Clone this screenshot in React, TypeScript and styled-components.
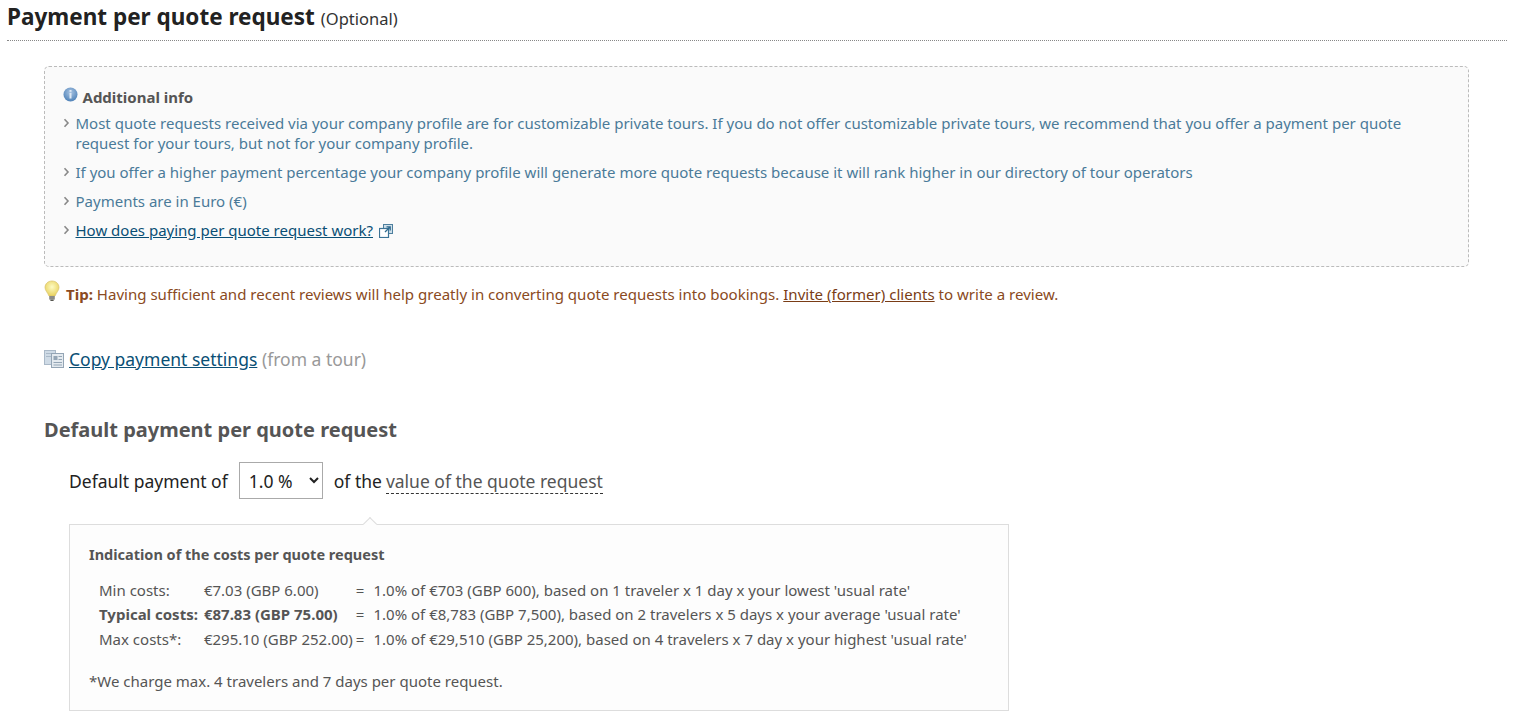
import React from 'react';
import styled, { createGlobalStyle } from 'styled-components';

const GlobalStyle = createGlobalStyle`
  html, body {
    margin: 0;
    padding: 0;
    background: #fff;
    font-family: "Noto Sans", "Open Sans", sans-serif;
    color: #333;
    overflow: hidden;
  }
`;

const Page = styled.div`
  height: 723px;
  padding: 0 12px 0 7px;
  overflow: hidden;
`;

const PageHeader = styled.div`
  height: 40px;
  border-bottom: 1px dotted #888;
  display: flex;
  align-items: baseline;
  gap: 6px;
`;

const PageTitle = styled.h1`
  margin: 0;
  font-size: 22.5px;
  line-height: 33px;
  font-weight: 700;
  color: #222;
`;

const Optional = styled.span`
  font-size: 16.5px;
  color: #333;
`;

const Content = styled.div`
  padding: 25px 38px 0 37px;
`;

const InfoBox = styled.div`
  height: 201px;
  box-sizing: border-box;
  padding: 20px 18px 0 18px;
  background: #fafafa;
  border: 1px dashed #bbb;
  border-radius: 5px;
`;

const InfoHeading = styled.div`
  display: flex;
  align-items: flex-start;
  gap: 5px;
  margin-top: -1px;
  font-size: 15px;
  line-height: 22px;
  font-weight: 700;
  color: #555;
`;

const InfoList = styled.ul`
  list-style: none;
  margin: 5px 0 0;
  padding: 0;
`;

const InfoItem = styled.li`
  display: flex;
  gap: 5.5px;
  margin-bottom: 9px;
  font-size: 15px;
  line-height: 20px;
  color: #4a7a99;
`;

const Chevron = styled.svg`
  flex: none;
  width: 7px;
  height: 10px;
  margin-top: 5px;
`;

const InfoLink = styled.a`
  color: #0a4f75;
  text-decoration: underline;
`;

const TipRow = styled.div`
  display: flex;
  align-items: flex-start;
  gap: 6px;
  margin-top: 13px;
  font-size: 15.05px;
  line-height: 28px;
  color: #8a4a22;
`;

const TipLink = styled.a`
  color: #7a3d16;
  text-decoration: underline;
`;

const CopyRow = styled.div`
  display: flex;
  align-items: center;
  gap: 4px;
  margin-top: 38px;
  font-size: 17.5px;
  line-height: 26px;
`;

const CopyLink = styled.a`
  color: #0a4f75;
  text-decoration: underline;
`;

const Muted = styled.span`
  color: #999;
`;

const SectionTitle = styled.h2`
  margin: 44px 0 0;
  font-size: 20px;
  line-height: 28px;
  font-weight: 700;
  color: #555;
`;

const Indented = styled.div`
  padding-left: 25px;
`;

const PaymentRow = styled.div`
  display: flex;
  align-items: center;
  margin-top: 18px;
  font-size: 17.5px;
  color: #222;
`;

const PercentSelect = styled.select`
  width: 84px;
  height: 37px;
  margin: 0 11px 0 11px;
  padding: 0 7px 0 5px;
  font-family: inherit;
  font-size: 17.5px;
  color: #222;
  background: #fff;
  border: 1px solid #aaa;
  border-radius: 0;
`;

const Definition = styled.span`
  margin: 2px 0 0 4px;
  color: #555;
  border-bottom: 1px dashed #333;
  line-height: 24px;
`;

const CostBox = styled.div`
  position: relative;
  width: 940px;
  height: 187px;
  box-sizing: border-box;
  margin-top: 25px;
  padding: 19px 19px 0;
  background: #fdfdfd;
  border: 1px solid #ddd;

  &::before {
    content: '';
    position: absolute;
    top: -6px;
    left: 295px;
    width: 9px;
    height: 9px;
    background: #fdfdfd;
    border-top: 1px solid #ddd;
    border-left: 1px solid #ddd;
    transform: rotate(45deg);
  }
`;

const CostTitle = styled.div`
  font-size: 14.5px;
  line-height: 20px;
  font-weight: 700;
  color: #555;
`;

const CostTable = styled.table`
  margin: 13.6px 0 0 10px;
  border-collapse: collapse;
  font-size: 15px;
  color: #555;
`;

const CostRow = styled.tr<{ $strong?: boolean }>`
  height: 24.5px;
  font-weight: ${p => (p.$strong ? 700 : 400)};
`;

const CostCell = styled.td<{ $pad?: number }>`
  padding: 0 ${p => p.$pad ?? 0}px 0 0;
  white-space: nowrap;
`;

const EqualsCell = styled.td`
  padding: 0 9px 0 0;
  font-weight: 400;
`;

const Basis = styled.td`
  padding: 0;
  white-space: nowrap;
  font-weight: 400;
`;

const Footnote = styled.div`
  margin-top: 20px;
  font-size: 15px;
  line-height: 20px;
  color: #555;
`;

const InfoIcon = () => (
  <svg width="15" height="15" viewBox="0 0 15 15" style={{ flex: 'none', marginTop: 1, marginLeft: -0.5 }}>
    <defs>
      <radialGradient id="infoFill" cx="50%" cy="35%" r="65%">
        <stop offset="0%" stopColor="#a9c4e2" />
        <stop offset="100%" stopColor="#4f82b8" />
      </radialGradient>
    </defs>
    <circle cx="7.5" cy="7.5" r="7" fill="url(#infoFill)" />
    <rect x="6.5" y="3" width="2" height="1.8" fill="#dfe9f4" />
    <rect x="6.5" y="6" width="2" height="5.5" fill="#dfe9f4" />
  </svg>
);

const ChevronIcon = () => (
  <Chevron viewBox="0 0 7 10">
    <path d="M1.5 1.2 L5 5 L1.5 8.8" fill="none" stroke="#888" strokeWidth="1.6" />
  </Chevron>
);

const PopupIcon = () => (
  <svg width="14" height="14" viewBox="0 0 14 14" style={{ marginLeft: 6, verticalAlign: -2 }}>
    <rect x="4.5" y="0.5" width="9" height="9" fill="#cfdfe9" stroke="#4d7f9e" />
    <rect x="0.5" y="4.5" width="9" height="9" fill="#fff" stroke="#3c7396" strokeWidth="1.2" />
    <path d="M6 8 L10.5 3.5 M7.5 2.8 H11.2 V6.5" fill="none" stroke="#2f6a8e" strokeWidth="1.3" />
  </svg>
);

const BulbIcon = () => (
  <svg width="16" height="22" viewBox="0 0 16 22" style={{ flex: 'none' }}>
    <defs>
      <radialGradient id="bulbFill" cx="50%" cy="40%" r="60%">
        <stop offset="0%" stopColor="#fdfbc4" />
        <stop offset="100%" stopColor="#e9d25e" />
      </radialGradient>
    </defs>
    <path d="M8 1 C3.8 1 1 4 1 7.5 C1 10.5 3.6 12.5 5 16 H11 C12.4 12.5 15 10.5 15 7.5 C15 4 12.2 1 8 1 Z" fill="url(#bulbFill)" stroke="#d8c16a" strokeWidth="0.7" />
    <rect x="5.2" y="16" width="5.6" height="3.6" fill="#8b8b86" />
    <rect x="6.4" y="19.6" width="3.2" height="1.4" fill="#55554f" />
  </svg>
);

const CopyIcon = () => (
  <svg width="21" height="19" viewBox="0 0 21 19" style={{ flex: 'none' }}>
    <rect x="0.5" y="0.5" width="11" height="14" fill="#cfdbe6" stroke="#aab9c8" />
    <rect x="2" y="3" width="8" height="1" fill="#aab9c8" />
    <rect x="2" y="6" width="5" height="1" fill="#aab9c8" />
    <rect x="7.5" y="3.5" width="12" height="14" fill="#e4eaef" stroke="#94a5b5" />
    <rect x="9.5" y="6" width="4" height="4" fill="#94a5b5" />
    <rect x="14.5" y="6" width="3.5" height="1" fill="#94a5b5" />
    <rect x="14.5" y="9" width="3.5" height="1" fill="#94a5b5" />
    <rect x="9.5" y="12" width="8.5" height="1" fill="#94a5b5" />
    <rect x="9.5" y="14.5" width="8.5" height="1" fill="#94a5b5" />
  </svg>
);

const costs = [
  { label: 'Min costs:', amount: '€7.03 (GBP 6.00)', basis: "1.0% of €703 (GBP 600), based on 1 traveler x 1 day x your lowest 'usual rate'" },
  { label: 'Typical costs:', amount: '€87.83 (GBP 75.00)', basis: "1.0% of €8,783 (GBP 7,500), based on 2 travelers x 5 days x your average 'usual rate'", strong: true },
  { label: 'Max costs*:', amount: '€295.10 (GBP 252.00)', basis: "1.0% of €29,510 (GBP 25,200), based on 4 travelers x 7 day x your highest 'usual rate'" },
];

const App: React.FC = () => (
  <Page>
    <GlobalStyle />
    <PageHeader>
      <PageTitle>Payment per quote request</PageTitle>
      <Optional>(Optional)</Optional>
    </PageHeader>
    <Content>
      <InfoBox>
        <InfoHeading>
          <InfoIcon />
          Additional info
        </InfoHeading>
        <InfoList>
          <InfoItem>
            <ChevronIcon />
            <span>Most quote requests received via your company profile are for customizable private tours. If you do not offer customizable private tours, we recommend that you offer a payment per quote request for your tours, but not for your company profile.</span>
          </InfoItem>
          <InfoItem>
            <ChevronIcon />
            <span>If you offer a higher payment percentage your company profile will generate more quote requests because it will rank higher in our directory of tour operators</span>
          </InfoItem>
          <InfoItem>
            <ChevronIcon />
            <span>Payments are in Euro (€)</span>
          </InfoItem>
          <InfoItem>
            <ChevronIcon />
            <span>
              <InfoLink href="#">How does paying per quote request work?</InfoLink>
              <PopupIcon />
            </span>
          </InfoItem>
        </InfoList>
      </InfoBox>
      <TipRow>
        <BulbIcon />
        <span>
          <strong>Tip:</strong> Having sufficient and recent reviews will help greatly in converting quote requests into bookings.{' '}
          <TipLink href="#">Invite (former) clients</TipLink> to write a review.
        </span>
      </TipRow>
      <CopyRow>
        <CopyIcon />
        <span>
          <CopyLink href="#">Copy payment settings</CopyLink> <Muted>(from a tour)</Muted>
        </span>
      </CopyRow>
      <SectionTitle>Default payment per quote request</SectionTitle>
      <Indented>
        <PaymentRow>
          Default payment of
          <PercentSelect defaultValue="1.0">
            <option value="1.0">1.0 %</option>
          </PercentSelect>
          of the
          <Definition>value of the quote request</Definition>
        </PaymentRow>
        <CostBox>
          <CostTitle>Indication of the costs per quote request</CostTitle>
          <CostTable>
            <tbody>
              {costs.map(c => (
                <CostRow key={c.label} $strong={c.strong}>
                  <CostCell $pad={6}>{c.label}</CostCell>
                  <CostCell $pad={3}>{c.amount}</CostCell>
                  <EqualsCell>=</EqualsCell>
                  <Basis>{c.basis}</Basis>
                </CostRow>
              ))}
            </tbody>
          </CostTable>
          <Footnote>*We charge max. 4 travelers and 7 days per quote request.</Footnote>
        </CostBox>
      </Indented>
    </Content>
  </Page>
);

export default App;
